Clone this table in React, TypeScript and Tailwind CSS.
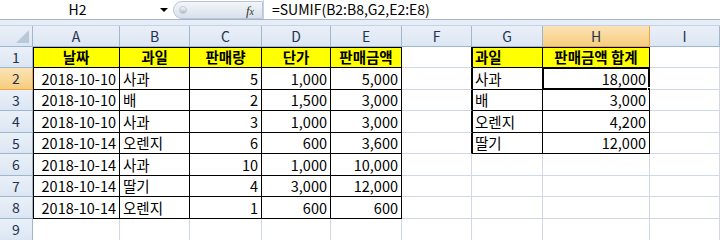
import React from "react";

const colW = [87, 70, 72, 69, 71, 70, 71, 107, 70];
const colNames = ["A", "B", "C", "D", "E", "F", "G", "H", "I"];
const rowH = [21, 22, 21, 22, 21, 22, 21, 22, 22];

type Cell = { t: string; align?: "l" | "r" | "c"; bold?: boolean; yellow?: boolean };

const data: (Cell | null)[][] = [
  [
    { t: "날짜", align: "c", bold: true, yellow: true },
    { t: "과일", align: "c", bold: true, yellow: true },
    { t: "판매량", align: "c", bold: true, yellow: true },
    { t: "단가", align: "c", bold: true, yellow: true },
    { t: "판매금액", align: "c", bold: true, yellow: true },
    null,
    { t: "과일", align: "l", bold: true, yellow: true },
    { t: "판매금액 합계", align: "c", bold: true, yellow: true },
    null,
  ],
  [{ t: "2018-10-10", align: "r" }, { t: "사과" }, { t: "5", align: "r" }, { t: "1,000", align: "r" }, { t: "5,000", align: "r" }, null, { t: "사과" }, { t: "18,000", align: "r" }, null],
  [{ t: "2018-10-10", align: "r" }, { t: "배" }, { t: "2", align: "r" }, { t: "1,500", align: "r" }, { t: "3,000", align: "r" }, null, { t: "배" }, { t: "3,000", align: "r" }, null],
  [{ t: "2018-10-10", align: "r" }, { t: "사과" }, { t: "3", align: "r" }, { t: "1,000", align: "r" }, { t: "3,000", align: "r" }, null, { t: "오렌지" }, { t: "4,200", align: "r" }, null],
  [{ t: "2018-10-14", align: "r" }, { t: "오렌지" }, { t: "6", align: "r" }, { t: "600", align: "r" }, { t: "3,600", align: "r" }, null, { t: "딸기" }, { t: "12,000", align: "r" }, null],
  [{ t: "2018-10-14", align: "r" }, { t: "사과" }, { t: "10", align: "r" }, { t: "1,000", align: "r" }, { t: "10,000", align: "r" }, null, null, null, null],
  [{ t: "2018-10-14", align: "r" }, { t: "딸기" }, { t: "4", align: "r" }, { t: "3,000", align: "r" }, { t: "12,000", align: "r" }, null, null, null, null],
  [{ t: "2018-10-14", align: "r" }, { t: "오렌지" }, { t: "1", align: "r" }, { t: "600", align: "r" }, { t: "600", align: "r" }, null, null, null, null],
  [null, null, null, null, null, null, null, null, null],
];

function inTable(r: number, c: number) {
  if (r >= 1 && r <= 8 && c >= 0 && c <= 4) return true;
  if (r >= 1 && r <= 5 && c >= 6 && c <= 7) return true;
  return false;
}

const font = { fontFamily: '"Noto Sans CJK KR", "Noto Sans", sans-serif' };

export default function App() {
  return (
    <div className="w-[720px] h-[240px] overflow-hidden bg-white relative" style={font}>
      {/* formula bar */}
      <div className="flex h-[20px] bg-white border-b border-[#a5b6cc] items-center">
        <div className="w-[155px] h-full flex items-center justify-center text-[14px] text-black">H2</div>
        <div className="w-[18px] flex items-center justify-center">
          <div className="w-0 h-0 border-l-[4px] border-r-[4px] border-t-[4px] border-l-transparent border-r-transparent border-t-black" />
        </div>
        <div className="w-[90px] h-[18px] rounded-l-full bg-gradient-to-b from-[#f3f6fa] to-[#d9e1eb] border border-[#b8c5d6] flex items-center relative">
          <div className="ml-[5px] w-[8px] h-[8px] rounded-full bg-gradient-to-b from-[#ffffff] to-[#aeb6c0] border border-[#c0c8d2]" />
          <span className="absolute right-[8px] top-[-1px] italic text-[13px] text-[#333]" style={{ fontFamily: '"Liberation Serif", serif' }}>
            f<span className="text-[10px]">x</span>
          </span>
        </div>
        <div className="w-px h-full bg-[#c6d0dc]" />
        <div className="pl-[8px] text-[14px] text-black whitespace-nowrap">=SUMIF(B2:B8,G2,E2:E8)</div>
      </div>
      <div className="h-[6px] bg-[#e6edf6] border-b border-[#c5d2e3]" />
      {/* column header */}
      <div className="flex h-[21px]">
        <div className="w-[33px] h-full bg-gradient-to-b from-[#eaf0f8] to-[#dce6f3] border-r border-b border-[#9eb6ce] relative">
          <svg className="absolute right-[3px] bottom-[3px]" width="13" height="13" viewBox="0 0 13 13">
            <polygon points="13,0 13,13 0,13" fill="#b9c7d9" />
          </svg>
        </div>
        {colNames.map((n, i) => (
          <div
            key={n}
            className={
              "h-full flex items-center justify-center text-[14px] border-r border-b " +
              (i === 7
                ? "bg-gradient-to-b from-[#fbe3b6] to-[#f7cd7c] border-[#f2a24b] text-[#1f3250]"
                : "bg-gradient-to-b from-[#eaf0f8] to-[#dce6f3] border-[#9eb6ce] text-[#1f3250]")
            }
            style={{ width: colW[i] }}
          >
            {n}
          </div>
        ))}
      </div>
      {/* rows */}
      {data.map((row, ri) => {
        const r = ri + 1;
        return (
          <div key={r} className="flex" style={{ height: rowH[ri] }}>
            <div
              className={
                "w-[33px] h-full flex items-center justify-center text-[14px] border-r border-b " +
                (r === 2
                  ? "bg-gradient-to-b from-[#fbe3b6] to-[#f7cd7c] border-[#f2a24b] text-[#1f3250]"
                  : "bg-gradient-to-b from-[#eaf0f8] to-[#dce6f3] border-[#9eb6ce] text-[#1f3250]")
              }
            >
              {r}
            </div>
            {colW.map((w, ci) => {
              const cell = row[ci];
              const me = inTable(r, ci);
              const rightDark = me || inTable(r, ci + 1);
              const bottomDark = me || inTable(r + 1, ci);
              const leftDark = me && !inTable(r, ci - 1);
              const topDark = me && !inTable(r - 1, ci);
              let shadow = "";
              if (leftDark && topDark) shadow = "shadow-[inset_1px_1px_0_#000]";
              else if (leftDark) shadow = "shadow-[inset_1px_0_0_#000]";
              else if (topDark) shadow = "shadow-[inset_0_1px_0_#000]";
              const align = cell?.align === "r" ? "justify-end" : cell?.align === "c" ? "justify-center" : "justify-start";
              return (
                <div
                  key={ci}
                  className={
                    "h-full flex items-center px-[3px] text-[14.5px] text-black whitespace-nowrap relative border-r border-b " +
                    (rightDark ? "border-r-black " : "border-r-[#d0d7e5] ") +
                    (bottomDark ? "border-b-black " : "border-b-[#d0d7e5] ") +
                    (cell?.yellow ? "bg-[#ffff00] " : "bg-white ") +
                    align +
                    " " +
                    shadow +
                    (cell?.bold ? " font-bold" : "")
                  }
                  style={{ width: w }}
                >
                  {cell?.t}
                  {r === 2 && ci === 7 && (
                    <>
                      <div className="absolute left-[-1px] top-[-1px] right-[-1px] bottom-[-1px] border-2 border-black pointer-events-none" />
                      <div className="absolute right-[-4px] bottom-[-4px] w-[6px] h-[6px] bg-black border border-white" />
                    </>
                  )}
                </div>
              );
            })}
          </div>
        );
      })}
    </div>
  );
}
